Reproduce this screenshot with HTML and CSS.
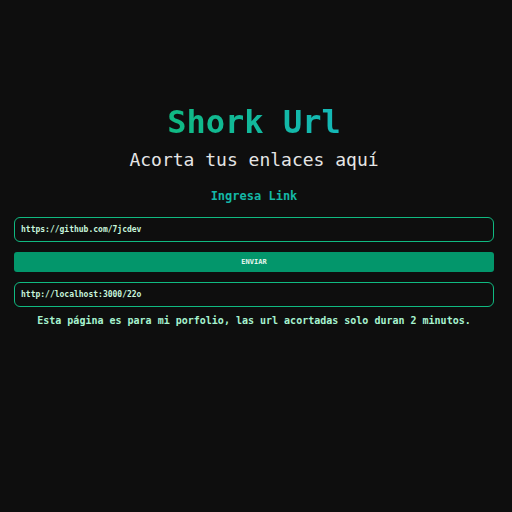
FILE: index.html
```html
<!DOCTYPE html>
<html lang="es">
<head>
<meta charset="utf-8">
<title>Shork Url</title>
<link rel="stylesheet" href="styles.css">
</head>
<body>
<main class="page">
  <h1 class="title">Shork Url</h1>
  <h2 class="subtitle">Acorta tus enlaces aquí</h2>
  <label class="label" for="link">Ingresa Link</label>
  <div class="field">https://github.com/7jcdev</div>
  <button class="btn">ENVIAR</button>
  <div class="field result">http://localhost:3000/22o</div>
  <p class="note">Esta página es para mi porfolio, las url acortadas solo duran 2 minutos.</p>
</main>
</body>
</html>
```
FILE: styles.css
```css
html, body {
  margin: 0;
  padding: 0;
  background: #0e0e0e;
  height: 100%;
}
body {
  font-family: "DejaVu Sans Mono", "Liberation Mono", monospace;
}
.page {
  display: flex;
  flex-direction: column;
  align-items: center;
  padding: 100px 18px 0 14px;
}
.title {
  margin: 0;
  font-size: 32px;
  line-height: 44px;
  font-weight: bold;
  background: linear-gradient(to right, #10b981, #14b8b8);
  -webkit-background-clip: text;
  background-clip: text;
  color: transparent;
}
.subtitle {
  margin: 2px 0 0;
  font-size: 18px;
  line-height: 28px;
  font-weight: normal;
  color: #e5e5e5;
}
.label {
  margin-top: 14px;
  font-size: 12px;
  line-height: 16px;
  font-weight: bold;
  color: #14b8a6;
}
.field {
  box-sizing: border-box;
  align-self: stretch;
  margin-top: 13px;
  height: 25px;
  border: 1px solid #10b981;
  border-radius: 6px;
  padding: 0 6px;
  display: flex;
  align-items: center;
  font-size: 8px;
  font-weight: bold;
  color: #c8f5dc;
}
.btn {
  align-self: stretch;
  margin-top: 10px;
  height: 20px;
  border: none;
  border-radius: 3px;
  background: #03966b;
  color: #e8f6ef;
  font-family: inherit;
  font-size: 7px;
  font-weight: bold;
  padding: 0;
}
.result {
  margin-top: 10px;
}
.note {
  margin: 6px 0 0;
  font-size: 10px;
  line-height: 16px;
  font-weight: bold;
  color: #a7f3d0;
  text-align: center;
}
```
